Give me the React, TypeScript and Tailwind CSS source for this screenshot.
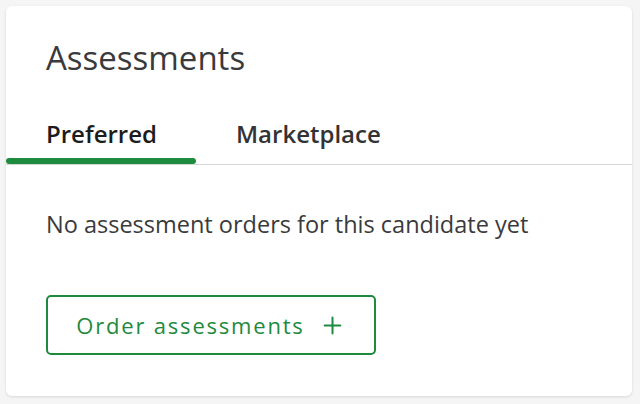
import { Plus } from "lucide-react";

export default function App() {
  return (
    <div className="w-[640px] h-[404px] bg-[#f5f5f5] p-[6px] pr-[8px] pb-[8px]" style={{ fontFamily: '"Open Sans", sans-serif' }}>
      <div className="h-full bg-white rounded-[6px] shadow-[0_1px_3px_rgba(0,0,0,0.12)] overflow-hidden">
        {/* Header */}
        <h1 className="pt-[29px] px-[40px] text-[33px] leading-[45px] text-[#3a3a3c] font-normal">Assessments</h1>

        {/* Tabs */}
        <div className="mt-[37px] flex border-b border-[#d6d6d6]">
          <div className="relative w-[190px] pl-[40px] pb-[14px]">
            <span className="text-[24px] leading-[33px] font-semibold text-[#1c1c1c]">Preferred</span>
            <div className="absolute left-0 right-0 bottom-0 h-[6px] rounded-full bg-[#1e8c3f]" />
          </div>
          <div className="pl-[40px] pb-[14px]">
            <span className="text-[24px] leading-[33px] font-semibold text-[#333336]">Marketplace</span>
          </div>
        </div>

        {/* Body */}
        <p className="mt-[43px] px-[40px] text-[23.5px] leading-[32px] text-[#3a3a3c]">
          No assessment orders for this candidate yet
        </p>

        <div className="px-[40px] mt-[55px]">
          <button className="w-[330px] h-[60px] flex items-center justify-center gap-[14px] border-2 border-[#1e8a3e] rounded-[5px] text-[#1e8a3e] text-[22px] leading-[30px] font-medium tracking-[1.8px]">
            Order assessments
            <Plus className="w-[27px] h-[27px]" strokeWidth={1.8} />
          </button>
        </div>
      </div>
    </div>
  );
}
